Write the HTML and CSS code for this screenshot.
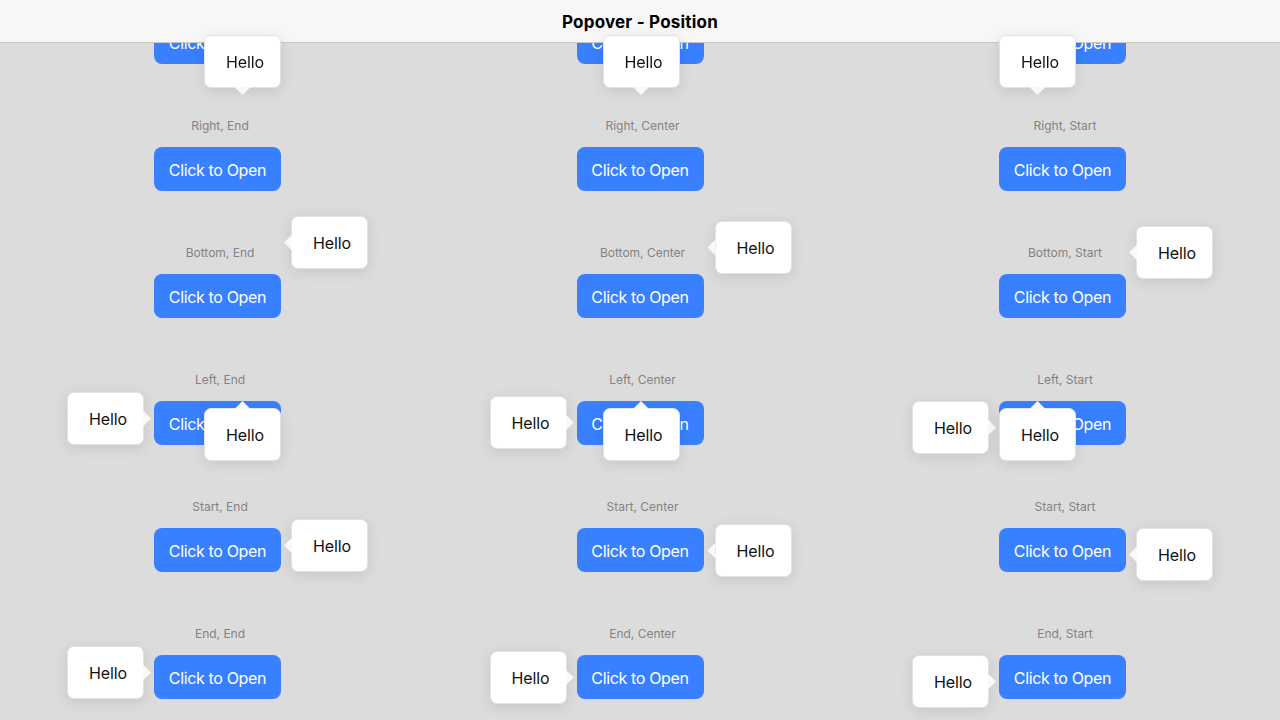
FILE: index.html
```html
<!DOCTYPE html>
<html>
<head>
<meta charset="utf-8">
<link rel="stylesheet" href="styles.css">
</head>
<body>
<header class="toolbar"><h1 class="title">Popover - Position</h1></header>
<main class="grid">
  <div class="cell"><span class="label">Top, End</span><div class="anchor"><button class="btn">Click to Open</button>
    <div class="pop arrow-down" style="left:50px;top:15px">Hello</div></div></div>
  <div class="cell"><span class="label">Top, Center</span><div class="anchor"><button class="btn">Click to Open</button>
    <div class="pop arrow-down" style="left:26px;top:15px">Hello</div></div></div>
  <div class="cell"><span class="label">Top, Start</span><div class="anchor"><button class="btn">Click to Open</button>
    <div class="pop arrow-down" style="left:0px;top:15px">Hello</div></div></div>

  <div class="cell"><span class="label">Right, End</span><div class="anchor"><button class="btn">Click to Open</button></div></div>
  <div class="cell"><span class="label">Right, Center</span><div class="anchor"><button class="btn">Click to Open</button></div></div>
  <div class="cell"><span class="label">Right, Start</span><div class="anchor"><button class="btn">Click to Open</button></div></div>

  <div class="cell"><span class="label">Bottom, End</span><div class="anchor"><button class="btn">Click to Open</button>
    <div class="pop arrow-left" style="left:137px;top:-58px">Hello</div></div></div>
  <div class="cell"><span class="label">Bottom, Center</span><div class="anchor"><button class="btn">Click to Open</button>
    <div class="pop arrow-left" style="left:138px;top:-53px">Hello</div></div></div>
  <div class="cell"><span class="label">Bottom, Start</span><div class="anchor"><button class="btn">Click to Open</button>
    <div class="pop arrow-left" style="left:137px;top:-48px">Hello</div></div></div>

  <div class="cell"><span class="label">Left, End</span><div class="anchor"><button class="btn">Click to Open</button>
    <div class="pop arrow-right" style="left:-87px;top:-9px">Hello</div>
    <div class="pop arrow-up" style="left:50px;top:7px">Hello</div></div></div>
  <div class="cell"><span class="label">Left, Center</span><div class="anchor"><button class="btn">Click to Open</button>
    <div class="pop arrow-right" style="left:-87px;top:-5px">Hello</div>
    <div class="pop arrow-up" style="left:26px;top:7px">Hello</div></div></div>
  <div class="cell"><span class="label">Left, Start</span><div class="anchor"><button class="btn">Click to Open</button>
    <div class="pop arrow-right" style="left:-87px;top:0px">Hello</div>
    <div class="pop arrow-up" style="left:0px;top:7px">Hello</div></div></div>

  <div class="cell"><span class="label">Start, End</span><div class="anchor"><button class="btn">Click to Open</button>
    <div class="pop arrow-left" style="left:137px;top:-9px">Hello</div></div></div>
  <div class="cell"><span class="label">Start, Center</span><div class="anchor"><button class="btn">Click to Open</button>
    <div class="pop arrow-left" style="left:138px;top:-4px">Hello</div></div></div>
  <div class="cell"><span class="label">Start, Start</span><div class="anchor"><button class="btn">Click to Open</button>
    <div class="pop arrow-left" style="left:137px;top:0px">Hello</div></div></div>

  <div class="cell"><span class="label">End, End</span><div class="anchor"><button class="btn">Click to Open</button>
    <div class="pop arrow-right" style="left:-87px;top:-9px">Hello</div></div></div>
  <div class="cell"><span class="label">End, Center</span><div class="anchor"><button class="btn">Click to Open</button>
    <div class="pop arrow-right" style="left:-87px;top:-4px">Hello</div></div></div>
  <div class="cell"><span class="label">End, Start</span><div class="anchor"><button class="btn">Click to Open</button>
    <div class="pop arrow-right" style="left:-87px;top:0px">Hello</div></div></div>
</main>
</body>
</html>
```
FILE: styles.css
```css
html, body {
  margin: 0;
  padding: 0;
  height: 100%;
  overflow: hidden;
}
body {
  background: #dcdcdc;
  font-family: Inter, "Liberation Sans", sans-serif;
  color: #000;
}
.toolbar {
  position: fixed;
  top: 0;
  left: 0;
  right: 0;
  height: 42px;
  background: #f7f7f7;
  border-bottom: 1px solid #c6c6c6;
  display: flex;
  align-items: center;
  justify-content: center;
  z-index: 10;
}
.title {
  margin: 0;
  font-size: 17px;
  font-weight: 700;
  letter-spacing: 0.2px;
  line-height: 20px;
  padding-top: 2px;
}
.grid {
  width: 1267.5px;
  margin: -9px auto 0;
  display: grid;
  grid-template-columns: repeat(3, 1fr);
  row-gap: 54px;
}
.cell {
  display: flex;
  flex-direction: column;
  align-items: center;
  gap: 13px;
}
.label {
  font-size: 12px;
  line-height: 16px;
  color: #838383;
  padding-left: 5px;
}
.anchor {
  position: relative;
}
.btn {
  display: block;
  width: 127px;
  height: 44px;
  border: 0;
  border-radius: 8px;
  background: #3880ff;
  color: #fff;
  font-family: Inter, "Liberation Sans", sans-serif;
  font-size: 16px;
  letter-spacing: -0.35px;
  padding: 1px 0 0;
}
.pop {
  position: absolute;
  z-index: 20;
  width: 77px;
  height: 53px;
  box-sizing: border-box;
  background: #fff;
  border: 1px solid #e2e2e2;
  border-radius: 7px;
  box-shadow: 0 3px 14px rgba(0, 0, 0, 0.1);
  display: flex;
  align-items: center;
  justify-content: center;
  padding-left: 5px;
  font-size: 16px;
  letter-spacing: -0.1px;
  color: #111;
}
.pop::after {
  content: "";
  position: absolute;
  background: #f9f9f9;
}
.arrow-down::after {
  top: 100%;
  left: 50%;
  width: 16px;
  height: 8px;
  margin-left: -8px;
  clip-path: polygon(0 0, 100% 0, 50% 100%);
}
.arrow-up::after {
  bottom: 100%;
  left: 50%;
  width: 16px;
  height: 8px;
  margin-left: -8px;
  clip-path: polygon(50% 0, 100% 100%, 0 100%);
}
.arrow-left::after {
  right: 100%;
  top: 50%;
  width: 8px;
  height: 16px;
  margin-top: -8px;
  clip-path: polygon(100% 0, 100% 100%, 0 50%);
}
.arrow-right::after {
  left: 100%;
  top: 50%;
  width: 8px;
  height: 16px;
  margin-top: -8px;
  clip-path: polygon(0 0, 100% 50%, 0 100%);
}
```
